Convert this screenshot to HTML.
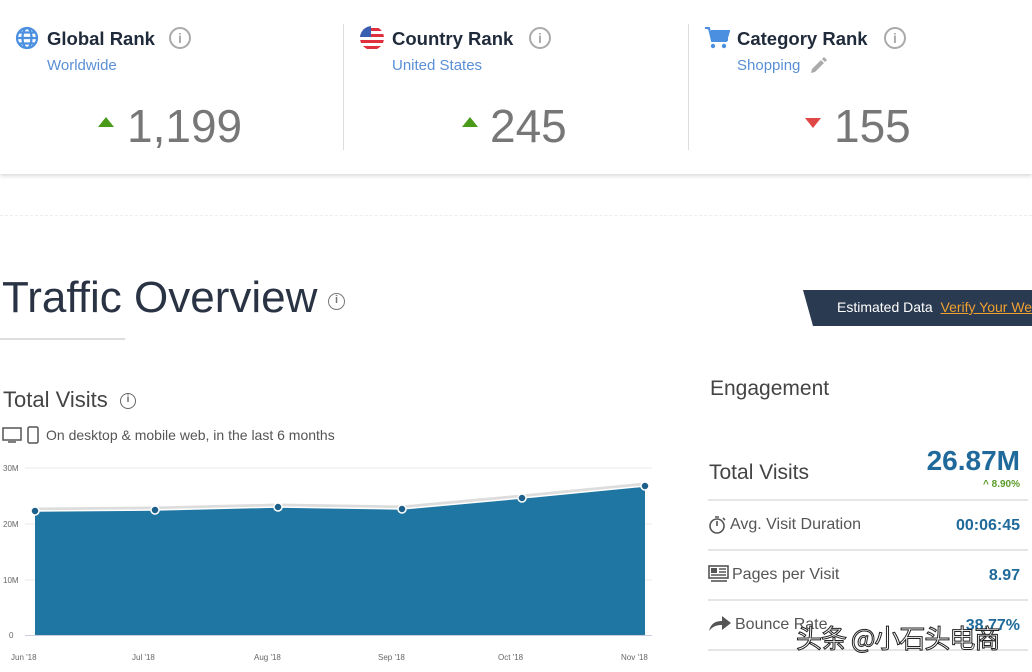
<!DOCTYPE html>
<html><head><meta charset="utf-8"><style>
*{margin:0;padding:0;box-sizing:border-box}
body{width:1032px;height:672px;overflow:hidden;background:#fff;font-family:"Liberation Sans","Noto Sans CJK SC",sans-serif;position:relative;color:#333}
.a{position:absolute}
.top{left:0;top:0;width:1032px;height:174px;background:#fff;box-shadow:0 2px 4px rgba(0,0,0,.15)}
.t{font-size:18.5px;font-weight:bold;color:#1f2a3a;top:28px}
.s{font-size:15px;color:#5a8fd6}
.n{font-size:46px;color:#777}
.info{width:22px;height:22px;border:2px solid #aaa;border-radius:50%;color:#aaa;font-size:14px;text-align:center;line-height:18px;font-weight:bold}
.sep{width:1px;height:126px;background:#ddd;top:24px}
.row{left:708px;width:320px;border-top:2px solid #e5e5e5}
.lab{font-size:16px;color:#555}
.val{font-size:16px;font-weight:bold;color:#1f6a9a;right:12px}
</style></head><body>
<div class="a top"></div>
<svg class="a" style="left:15px;top:26px" width="24" height="24" viewBox="0 0 24 24"><g fill="none" stroke="#4a8fe0" stroke-width="2.2"><circle cx="12" cy="12" r="10"/><ellipse cx="12" cy="12" rx="4.5" ry="10"/><path d="M2 12h20M4 6.5h16M4 17.5h16"/></g></svg>
<div class="a t" style="left:47px">Global Rank</div>
<div class="a info" style="left:169px;top:27px">i</div>
<div class="a s" style="left:47px;top:57px">Worldwide</div>
<div class="a" style="left:98px;top:117px;width:0;height:0;border-left:8px solid transparent;border-right:8px solid transparent;border-bottom:10px solid #4a9a1a"></div>
<div class="a n" style="left:127px;top:99px">1,199</div>
<div class="a sep" style="left:343px"></div>
<svg class="a" style="left:360px;top:26px" width="24" height="24" viewBox="0 0 24 24"><defs><clipPath id="c"><circle cx="12" cy="12" r="12"/></clipPath></defs><g clip-path="url(#c)"><rect width="24" height="24" fill="#fff"/><rect y="2" width="24" height="3" fill="#e03040"/><rect y="8" width="24" height="3" fill="#e03040"/><rect y="14" width="24" height="3" fill="#e03040"/><rect y="20" width="24" height="3" fill="#e03040"/><rect width="11" height="11" fill="#3a5fb0"/></g></svg>
<div class="a t" style="left:392px">Country Rank</div>
<div class="a info" style="left:529px;top:27px">i</div>
<div class="a s" style="left:392px;top:57px">United States</div>
<div class="a" style="left:462px;top:117px;width:0;height:0;border-left:8px solid transparent;border-right:8px solid transparent;border-bottom:10px solid #4a9a1a"></div>
<div class="a n" style="left:490px;top:99px">245</div>
<div class="a sep" style="left:688px"></div>
<svg class="a" style="left:704px;top:26px" width="26" height="24" viewBox="0 0 26 24"><path d="M1 2h4l3 13h14l3-10H7" fill="#4a8fe0" stroke="#4a8fe0" stroke-width="2"/><rect x="7" y="5" width="17" height="10" fill="#4a8fe0"/><circle cx="9" cy="20" r="2.2" fill="#4a8fe0"/><circle cx="20" cy="20" r="2.2" fill="#4a8fe0"/></svg>
<div class="a t" style="left:737px">Category Rank</div>
<div class="a info" style="left:884px;top:27px">i</div>
<div class="a s" style="left:737px;top:57px">Shopping</div>
<svg class="a" style="left:808px;top:56px" width="20" height="20" viewBox="0 0 20 20"><path d="M3 17l1-4 9-9 3 3-9 9z M14 3l2-2 3 3-2 2z" fill="#aaa"/></svg>
<div class="a" style="left:805px;top:118px;width:0;height:0;border-left:8px solid transparent;border-right:8px solid transparent;border-top:10px solid #e04848"></div>
<div class="a n" style="left:834px;top:99px">155</div>
<div class="a" style="left:0;top:215px;width:1032px;border-top:1px dashed #eee"></div>
<div class="a" style="left:2px;top:273px;font-size:44px;color:#2a3344">Traffic Overview</div>
<div class="a info" style="left:328px;top:293px;width:17px;height:17px;font-size:11px;line-height:13px;border-width:1.5px;color:#777;border-color:#777">i</div>
<div class="a" style="left:0;top:338px;width:125px;border-top:2px solid #ddd"></div>
<div class="a" style="left:803px;top:290px;width:240px;height:36px;background:#2a3a50;clip-path:polygon(0 0,100% 0,100% 100%,10px 100%);box-shadow:0 2px 3px rgba(0,0,0,.3)"></div>
<div class="a" style="left:837px;top:299px;font-size:14px;color:#fff;white-space:nowrap">Estimated Data&nbsp; <span style="color:#f0a030;text-decoration:underline">Verify Your Website</span></div>
<div class="a" style="left:3px;top:387px;font-size:22px;color:#444">Total Visits</div>
<div class="a info" style="left:120px;top:393px;width:16px;height:16px;font-size:10px;line-height:12px;border-width:1.5px;color:#666;border-color:#666">i</div>
<svg class="a" style="left:2px;top:426px" width="38" height="18" viewBox="0 0 38 18"><g fill="none" stroke="#555" stroke-width="1.5"><rect x="1" y="2" width="18" height="12"/><path d="M6 16h8"/><rect x="26" y="1" width="10" height="16" rx="1.5"/></g></svg>
<div class="a" style="left:46px;top:427px;font-size:14px;color:#555">On desktop &amp; mobile web, in the last 6 months</div>
<svg class="a" style="left:0;top:455px" width="670" height="217" viewBox="0 455 670 217">
<g stroke="#e8e8e8" stroke-width="1"><path d="M25 468H652M25 524H652M25 580H652"/></g>
<g font-size="8" fill="#666" font-family="Liberation Sans"><text x="3" y="471">30M</text><text x="3" y="527">20M</text><text x="3" y="583">10M</text><text x="9" y="638">0</text>
<text x="11" y="660">Jun '18</text><text x="132" y="660">Jul '18</text><text x="254" y="660">Aug '18</text><text x="378" y="660">Sep '18</text><text x="498" y="660">Oct '18</text><text x="621" y="660">Nov '18</text></g>
<path d="M35 511L155 510L278 507L402 509L522 498L645 486L645 635L35 635Z" fill="#1f76a2"/>
<path d="M35 509L155 508L278 505L402 507L522 496L645 484" fill="none" stroke="#ddd" stroke-width="3"/>
<path d="M35 511L155 510L278 507L402 509L522 498L645 486" fill="none" stroke="#fff" stroke-width="1.5"/>
<g fill="#1b5f8a" stroke="#fff" stroke-width="1.5"><circle cx="35" cy="511" r="4"/><circle cx="155" cy="510" r="4"/><circle cx="278" cy="507" r="4"/><circle cx="402" cy="509" r="4"/><circle cx="522" cy="498" r="4"/><circle cx="645" cy="486" r="4"/></g>
<path d="M25 635.5H652" stroke="#ccd" stroke-width="1"/>
</svg>
<div class="a" style="left:710px;top:377px;font-size:21px;color:#444">Engagement</div>
<div class="a" style="left:709px;top:461px;font-size:21px;color:#444">Total Visits</div>
<div class="a" style="right:12px;top:445px;font-size:28px;font-weight:bold;color:#1f6a9a">26.87M</div>
<div class="a" style="right:12px;top:479px;font-size:10px;font-weight:bold;color:#5a9a2a">^ 8.90%</div>
<div class="a row" style="top:499px"></div>
<svg class="a" style="left:708px;top:515px" width="20" height="20" viewBox="0 0 20 20"><g fill="none" stroke="#555" stroke-width="1.6"><circle cx="9" cy="11" r="7"/><path d="M9 11V6M7 2h4M15 3l2 2"/></g></svg>
<div class="a lab" style="left:730px;top:516px">Avg. Visit Duration</div>
<div class="a val" style="top:517px">00:06:45</div>
<div class="a row" style="top:549px"></div>
<svg class="a" style="left:708px;top:565px" width="22" height="18" viewBox="0 0 22 18"><g fill="none" stroke="#555" stroke-width="1.6"><rect x="1" y="1" width="19" height="12"/><path d="M3 16h16"/></g><rect x="3" y="3" width="6" height="5" fill="#555"/><path d="M11 4h7M11 7h7M3 10h15" stroke="#555" stroke-width="1.4"/></svg>
<div class="a lab" style="left:732px;top:566px">Pages per Visit</div>
<div class="a val" style="top:567px">8.97</div>
<div class="a row" style="top:599px"></div>
<svg class="a" style="left:708px;top:614px" width="24" height="18" viewBox="0 0 24 18"><path d="M1 17C3 9 8 7 14 7V2l9 7-9 7v-5C9 11 5 12 1 17z" fill="#555"/></svg>
<div class="a lab" style="left:735px;top:616px">Bounce Rate</div>
<div class="a val" style="top:617px">38.77%</div>
<div class="a row" style="top:649px"></div>
<div class="a" style="left:796px;top:619px;font-size:26px;color:#fff;-webkit-text-stroke:1px #222;font-family:'Noto Sans CJK SC',sans-serif;white-space:nowrap;letter-spacing:-1px">头条 @小石头电商</div>
</body></html>
